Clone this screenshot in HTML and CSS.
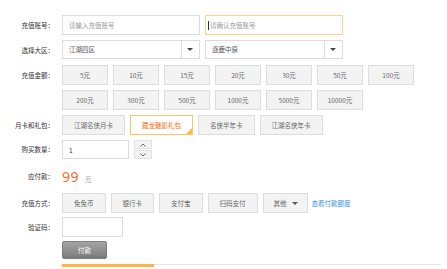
FILE: index.html
```html
<!DOCTYPE html>
<html lang="zh-CN">
<head>
    <meta charset="UTF-8">
    <title>充值</title>
    <link rel="stylesheet" href="styles.css">
</head>
<body>
    <div class="recharge">
        <div class="row">
            <span class="lbl">充值账号：</span>
            <div class="field">
                <div class="ipt">请输入充值账号</div>
                <div class="ipt focus"><i class="caret"></i>请确认充值账号</div>
            </div>
        </div>
        <div class="row">
            <span class="lbl">选择大区：</span>
            <div class="field">
                <div class="sel"><span class="txt">江湖四区</span><span class="arrow"></span></div>
                <div class="sel"><span class="txt">逐鹿中原</span><span class="arrow"></span></div>
            </div>
        </div>
        <div class="row">
            <span class="lbl">充值金额：</span>
            <div class="amounts">
                <span class="opt">5元</span>
                <span class="opt">10元</span>
                <span class="opt">15元</span>
                <span class="opt">20元</span>
                <span class="opt">30元</span>
                <span class="opt">50元</span>
                <span class="opt">100元</span>
                <span class="opt">200元</span>
                <span class="opt">300元</span>
                <span class="opt">500元</span>
                <span class="opt">1000元</span>
                <span class="opt">5000元</span>
                <span class="opt">10000元</span>
            </div>
        </div>
        <div class="row">
            <span class="lbl">月卡和礼包：</span>
            <div class="field">
                <span class="opt pad">江湖名侠月卡</span>
                <span class="opt pad on">藏龙魅影礼包</span>
                <span class="opt pad">名侠半年卡</span>
                <span class="opt pad">江湖名侠年卡</span>
            </div>
        </div>
        <div class="row">
            <span class="lbl short">购买数量：</span>
            <div class="field">
                <div class="ipt num">1</div>
                <div class="spin">
                    <span class="sbtn"><svg width="6" height="4" viewBox="0 0 6 4"><path d="M0.5 3.5 L3 1 L5.5 3.5" fill="none" stroke="#555" stroke-width="0.9"/></svg></span>
                    <span class="sbtn"><svg width="6" height="4" viewBox="0 0 6 4"><path d="M0.5 0.5 L3 3 L5.5 0.5" fill="none" stroke="#555" stroke-width="0.9"/></svg></span>
                </div>
            </div>
        </div>
        <div class="row pay">
            <span class="lbl">应付款：</span>
            <div class="field">
                <span class="price">99</span>
                <span class="unit">元</span>
            </div>
        </div>
        <div class="row tight">
            <span class="lbl">充值方式：</span>
            <div class="field">
                <span class="opt pad">免免币</span>
                <span class="opt pad">银行卡</span>
                <span class="opt pad">支付宝</span>
                <span class="opt pad">扫码支付</span>
                <span class="opt pad more">其他<i class="tri"></i></span>
                <a class="link" href="#">查看付款额度</a>
            </div>
        </div>
        <div class="row tight">
            <span class="lbl">验证码：</span>
            <div class="field">
                <div class="ipt code"></div>
            </div>
        </div>
        <div class="row">
            <span class="lbl"></span>
            <span class="paybtn">付款</span>
        </div>
        <div class="bar"><span class="done"></span></div>
    </div>
</body>
</html>
```
FILE: styles.css
```css
*{
    margin: 0;
    padding: 0;
    box-sizing: border-box;
}
body{
    font-family: "Noto Sans CJK SC", "Noto Sans", sans-serif;
    font-size: 6.5px;
    color: #333;
    background: #fff;
}
.recharge{
    padding-top: 15px;
}
.row{
    display: flex;
    align-items: flex-start;
    margin-bottom: 5px;
}
.row.tight{
    margin-bottom: 4px;
}
.lbl{
    width: 54px;
    margin-right: 8px;
    flex-shrink: 0;
    text-align: right;
    line-height: 20px;
    color: #333;
}
.lbl.short{
    line-height: 19px;
}
.field{
    display: flex;
    align-items: center;
    gap: 5px;
}
.ipt{
    width: 138px;
    height: 20px;
    border: 1px solid #dcdcdc;
    padding: 0 6px;
    display: flex;
    align-items: center;
    color: #9a9a9a;
}
.ipt.focus{
    border-color: #fcd48a;
    padding-left: 2px;
}
.caret{
    width: 1px;
    height: 9px;
    background: #333;
    margin-right: 1px;
}
.sel{
    width: 138px;
    height: 19px;
    border: 1px solid #dcdcdc;
    display: flex;
}
.sel .txt{
    flex: 1;
    padding-left: 6px;
    line-height: 17px;
    color: #555;
}
.sel .arrow{
    width: 18px;
    border-left: 1px solid #dcdcdc;
    position: relative;
}
.sel .arrow::after{
    content: "";
    position: absolute;
    left: 5px;
    top: 7px;
    border-top: 3px solid #444;
    border-left: 3px solid transparent;
    border-right: 3px solid transparent;
}
.amounts{
    width: 360px;
    display: flex;
    flex-wrap: wrap;
    gap: 5px;
}
.opt{
    width: 46px;
    height: 20px;
    line-height: 18px;
    text-align: center;
    background: #f3f3f3;
    border: 1px solid #dddddd;
    color: #666;
    position: relative;
}
.opt.pad{
    width: auto;
    padding: 0 11px;
}
.opt.on{
    background: #fff;
    border-color: #f9c66a;
    color: #f26c12;
}
.opt.on::after{
    content: "";
    position: absolute;
    right: 0;
    bottom: 0;
    border-bottom: 6px solid #f9b94c;
    border-left: 6px solid transparent;
}
.opt.more{
    padding: 0 9px 0 10px;
    display: flex;
    align-items: center;
    gap: 5px;
}
.tri{
    border-top: 3px solid #555;
    border-left: 3px solid transparent;
    border-right: 3px solid transparent;
}
.link{
    color: #3c8fd6;
    text-decoration: none;
    margin-left: -1px;
}
.ipt.num{
    width: 67px;
    height: 19px;
    color: #333;
}
.spin{
    display: flex;
    flex-direction: column;
    gap: 1px;
}
.sbtn{
    width: 18px;
    height: 9px;
    background: #f3f3f3;
    border: 1px solid #e2e2e2;
    display: flex;
    align-items: center;
    justify-content: center;
}
.row.pay{
    height: 24px;
    align-items: center;
}
.row.pay .field{
    align-items: baseline;
    gap: 6px;
}
.price{
    font-family: "Noto Sans", sans-serif;
    font-size: 14px;
    color: #ff6a1f;
    letter-spacing: 0.5px;
}
.unit{
    color: #999;
}
.ipt.code{
    width: 61px;
}
.paybtn{
    width: 45px;
    height: 18px;
    line-height: 16px;
    text-align: center;
    color: #fff;
    border: 1px solid #7d7d7d;
    border-radius: 2px;
    background: linear-gradient(#a4a4a4, #7b7b7b);
}
.bar{
    margin: 4px 0 0 62px;
    width: 379px;
    height: 3px;
    border-top: 1px solid #e6e6e6;
    position: relative;
}
.bar .done{
    position: absolute;
    left: 0;
    top: -1px;
    width: 92px;
    height: 3px;
    background: #fbb448;
}
```
